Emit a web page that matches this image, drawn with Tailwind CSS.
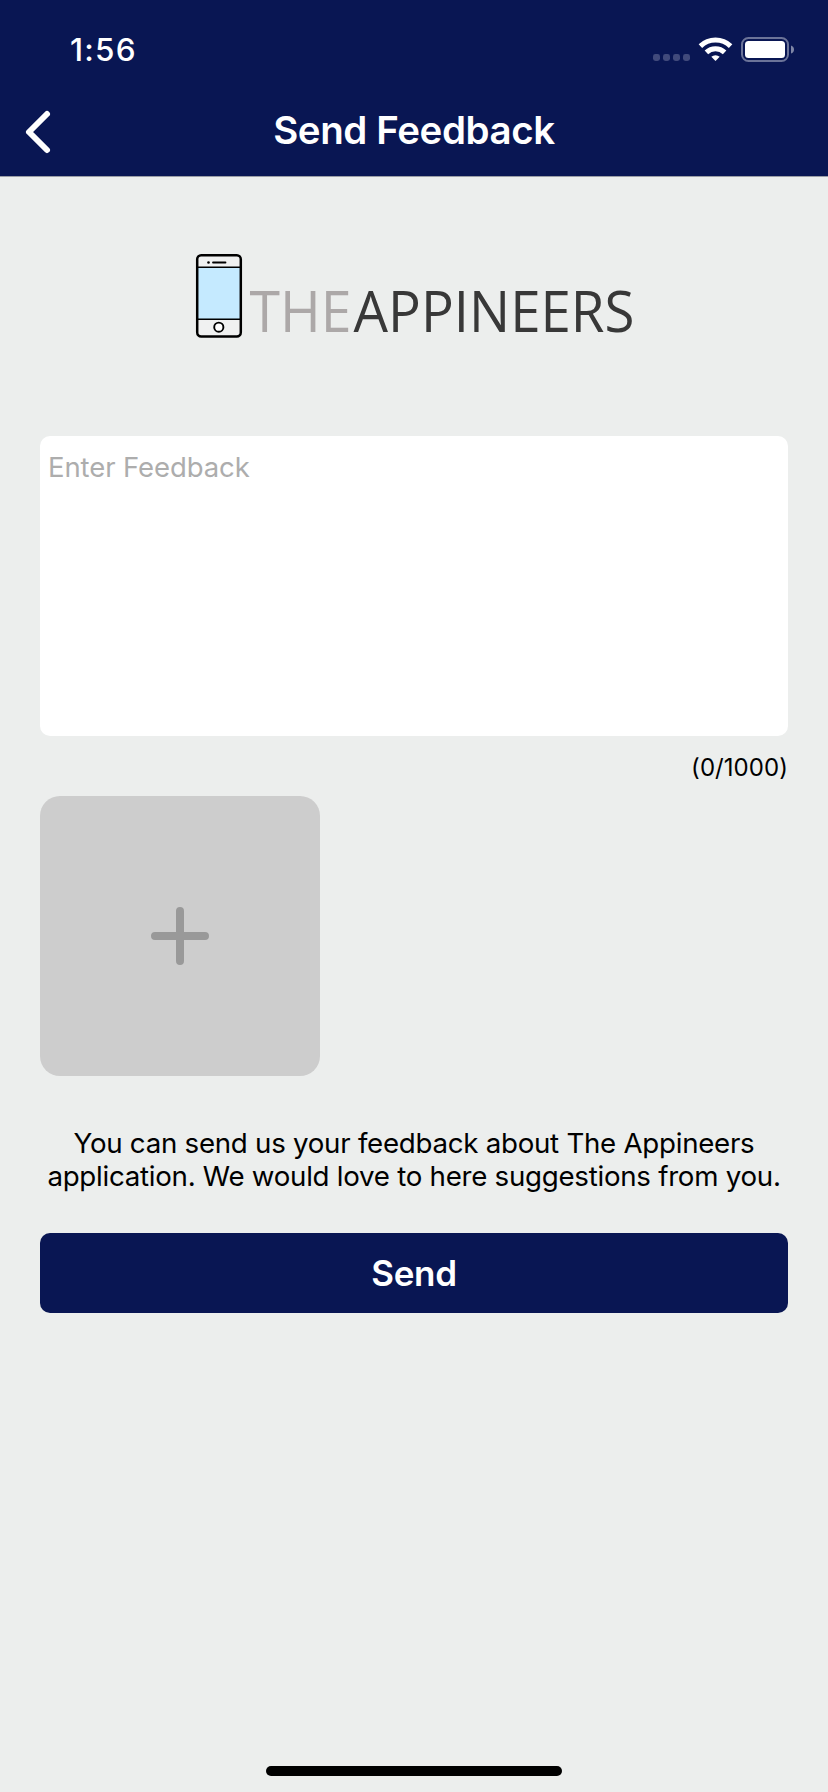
<!DOCTYPE html>
<html lang="en">
<head>
<meta charset="utf-8">
<title>Send Feedback</title>
<script src="https://cdn.jsdelivr.net/npm/@tailwindcss/browser@4"></script>
</head>
<body class="w-[828px] h-[1792px] bg-[#eceeed] font-['Inter',sans-serif] text-black flex flex-col overflow-hidden">
  <header class="h-[177px] shrink-0 bg-[#091653] border-b border-[#9a9da6] text-white flex flex-col">
    <div class="h-[88px] flex items-start justify-between pl-[70px] pr-[33px]">
      <span class="mt-[30px] text-[31.5px] leading-[40px] font-medium tracking-[1.2px]">1:56</span>
      <svg class="mt-[30px]" width="145" height="40" viewBox="650 30 145 40">
        <g fill="#414a7b"><rect x="653" y="54" width="7" height="7" rx="2.4"/><rect x="663" y="54" width="7" height="7" rx="2.4"/><rect x="673" y="54" width="7" height="7" rx="2.4"/><rect x="683" y="54" width="7" height="7" rx="2.4"/></g>
        <path fill="#fff" d="M715.5 61l-4.2-4.2a6.3 6.3 0 0 1 8.4 0z"/>
        <g fill="none" stroke="#fff" stroke-width="5"><path d="M706.4 52.4a13 13 0 0 1 18.2 0"/><path d="M700.4 46.1a21.8 21.8 0 0 1 30.2 0"/></g>
        <rect x="742" y="38" width="46" height="23" rx="6.5" fill="none" stroke="#6b7398" stroke-width="2"/>
        <rect x="745" y="41" width="40" height="17" rx="3.5" fill="#fff"/>
        <path fill="#7f86a6" d="M791 45.5q3 1 3 4t-3 4z"/>
      </svg>
    </div>
    <div class="h-[88px] grid grid-cols-[100px_1fr_100px]">
      <svg width="100" height="88" viewBox="0 88 100 88"><path d="M47 114L29 132L47 150" fill="none" stroke="#fff" stroke-width="6" stroke-linecap="round" stroke-linejoin="round"/></svg>
      <h1 class="text-center whitespace-nowrap text-[38.5px] leading-[84px] font-semibold tracking-[-0.4px]">Send Feedback</h1>
    </div>
  </header>
  <main class="px-10 flex flex-col">
    <svg class="mt-[63px] self-center overflow-visible" width="448" height="110" viewBox="190 240 448 110">
      <rect x="197.2" y="255.2" width="43.6" height="81.4" rx="4" fill="#f0f1f1"/>
      <path d="M197 267H241V319H197z" fill="#c5eaff"/>
      <path d="M197 267.2H241M197 319.3H241" stroke="#000" stroke-width="1.6"/>
      <rect x="197.2" y="255.2" width="43.6" height="81.4" rx="4" fill="none" stroke="#000" stroke-width="2.5"/>
      <circle cx="208.5" cy="262.5" r="1.3"/><path d="M213 262.5H225.5" stroke="#000" stroke-width="1.8" stroke-linecap="round"/>
      <circle cx="218.8" cy="327.2" r="4.6" fill="#fff" stroke="#000" stroke-width="1.9"/>
      <g class="font-['Open_Sans',sans-serif] text-[57px]">
        <text x="249.5" y="332" fill="#aca8a8" textLength="102" lengthAdjust="spacingAndGlyphs">THE</text>
        <text x="353.5" y="332" fill="#383838" textLength="281" lengthAdjust="spacingAndGlyphs">APPINEERS</text>
      </g>
    </svg>
    <textarea class="mt-[86px] block h-[300px] w-full resize-none rounded-[10px] bg-white pl-2 pt-[14px] text-[27.5px] leading-[34px] tracking-[-0.1px] placeholder:text-[#adadad] outline-none" placeholder="Enter Feedback"></textarea>
    <p class="mt-[14px] h-[34px] text-right text-[24px] leading-[36px] tracking-[0.05px]">(0/1000)</p>
    <button class="mt-3 w-[280px] h-[280px] rounded-[20px] bg-[#cdcdcd] flex items-center justify-center" aria-label="Add image">
      <svg width="60" height="60" viewBox="0 0 60 60"><path d="M30 5V55M5 30H55" stroke="#999" stroke-width="8" stroke-linecap="round"/></svg>
    </button>
    <p class="mt-[51px] -mx-2 text-center whitespace-nowrap text-[27.7px] leading-[33px] tracking-[-0.27px]">You can send us your feedback about The Appineers<br>application. We would love to here suggestions from you.</p>
    <button class="mt-10 h-20 rounded-[10px] bg-[#091653] text-white text-[35px] font-semibold tracking-[-0.3px]">Send</button>
  </main>
  <div class="mt-auto mb-4 self-center w-[296px] h-[10px] rounded-full bg-black"></div>
</body>
</html>
